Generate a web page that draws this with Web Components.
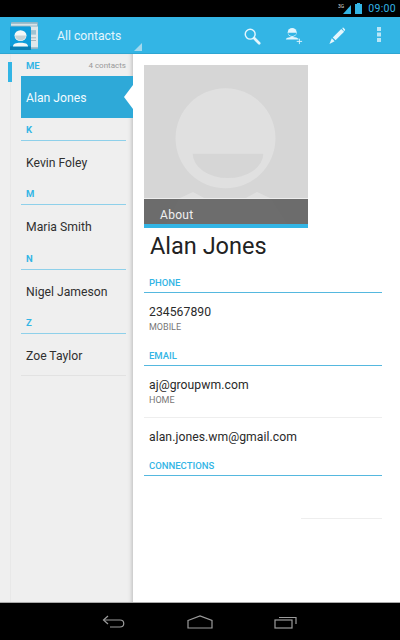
<!DOCTYPE html>
<html>
<head>
<meta charset="utf-8">
<style>
html, body { margin: 0; padding: 0; background: #000; }
body { width: 400px; height: 640px; overflow: hidden; font-family: Roboto, "Liberation Sans", sans-serif; }
</style>
</head>
<body>
<phone-shell>
  <status-bar slot="status"></status-bar>
  <action-bar slot="action"></action-bar>
  <contact-list slot="list">
    <list-head label="ME" first><span>4 contacts</span></list-head>
    <list-row selected>Alan Jones</list-row>
    <list-head label="K"></list-head>
    <list-row>Kevin Foley</list-row>
    <list-head label="M"></list-head>
    <list-row>Maria Smith</list-row>
    <list-head label="N"></list-head>
    <list-row>Nigel Jameson</list-row>
    <list-head label="Z"></list-head>
    <list-row last>Zoe Taylor</list-row>
  </contact-list>
  <contact-detail slot="detail">
    <contact-photo>About</contact-photo>
    <h1 slot="name">Alan Jones</h1>
    <detail-section slot="rows" label="PHONE">
      <detail-row sub="MOBILE">234567890</detail-row>
    </detail-section>
    <detail-section slot="rows" label="EMAIL">
      <detail-row sub="HOME" divider>aj@groupwm.com</detail-row>
      <detail-row>alan.jones.wm@gmail.com</detail-row>
    </detail-section>
    <detail-section slot="rows" label="CONNECTIONS" tail></detail-section>
  </contact-detail>
  <nav-bar slot="nav"></nav-bar>
</phone-shell>

<script>
function define(name, css, html) {
  customElements.define(name, class extends HTMLElement {
    constructor() {
      super();
      var root = this.attachShadow({ mode: 'open' });
      root.innerHTML = '<style>' + css + '</style>' + html(this);
    }
  });
}

define('phone-shell', `
  :host { display: flex; flex-direction: column; width: 400px; height: 640px; }
  .main { flex: 1; display: flex; min-height: 0; background: #fff; }
`, function () { return `
  <slot name="status"></slot>
  <slot name="action"></slot>
  <div class="main"><slot name="list"></slot><slot name="detail"></slot></div>
  <slot name="nav"></slot>`; });

define('status-bar', `
  :host { display: flex; align-items: center; justify-content: flex-end; gap: 3px; height: 16px; padding-right: 4px; background: #000; color: #33b5e5; }
  .time { font-size: 10.5px; letter-spacing: .3px; margin-left: 3px; }
  svg { display: block; }
`, function () { return `
  <svg width="14" height="11" viewBox="0 0 14 11"><path d="M5 11 13 2v9z" fill="#33b5e5"/><text x="0" y="5" font-size="5" fill="#ddd" font-family="Roboto">3G</text></svg>
  <svg width="7" height="11" viewBox="0 0 7 11"><path d="M2 0h3v1h2v10H0V1h2z" fill="#33b5e5"/></svg>
  <span class="time">09:00</span>`; });

define('action-bar', `
  :host { display: flex; align-items: center; position: relative; height: 37px; margin-top: 1px; background: #33b5e5; box-shadow: inset 0 -1px 0 #2ea6d2; color: #e4f6fd; }
  .logo { margin-left: 10px; display: block; }
  .title { font-size: 12.2px; margin-left: 19px; flex: 1; }
  .caret { position: absolute; left: 134px; top: 26px; width: 0; height: 0; border-style: solid; border-width: 0 0 8px 8px; border-color: transparent transparent #a3d9ee transparent; }
  .icons { display: flex; }
  .icon { display: flex; justify-content: center; width: 42.500px; }
  .icons svg { display: block; }
`, function () { return `
  <svg class="logo" width="28" height="28" viewBox="0 0 28 31" preserveAspectRatio="none">
    <rect x="1" y="0" width="27" height="30" rx="1" fill="#8fb6c7"/>
    <rect x="1" y="2" width="26" height="2" fill="#d8e3e8"/>
    <rect x="20" y="5" width="8" height="23" fill="#dfe7ea"/>
    <rect x="21" y="9" width="5" height="5" fill="#9fc3d2"/>
    <rect x="21" y="17" width="5" height="1" fill="#9fb0b8"/>
    <rect x="21" y="20" width="5" height="1" fill="#9fb0b8"/>
    <rect x="0" y="5" width="21" height="26" rx="1" fill="#0f9ddb"/>
    <rect x="0" y="27" width="21" height="4" fill="#0b7fb4"/>
    <circle cx="10.500" cy="15" r="6" fill="#f3f7f8"/>
    <path d="M5 15h11a5.500 5.500 0 0 1-11 0z" fill="#c7d2d6"/>
    <path d="M3 27c0-3 3-4 7.500-4s7.500 1 7.500 4z" fill="#f3f7f8"/>
  </svg>
  <span class="title">All contacts</span>
  <span class="caret"></span>
  <div class="icons">
    <span class="icon"><svg width="18" height="18" viewBox="0 0 20 20" fill="none" stroke="#e4f6fd"><circle cx="8" cy="8" r="5.500" stroke-width="1.600"/><path d="M12.500 12.500 18 18" stroke-width="3" stroke-linecap="round"/></svg></span>
    <span class="icon"><svg width="18" height="18" viewBox="0 0 20 20" fill="#e4f6fd"><circle cx="8" cy="6" r="5"/><path d="M3.500 6.500h9a4.500 3.500 0 0 1-9 0z" fill="#33b5e5"/><path d="M1 14c0-2 3-3 7-3s6 1 7 2v1z"/><path d="M16 13v6M13 16h6" stroke="#e4f6fd" stroke-width="1"/></svg></span>
    <span class="icon"><svg width="18" height="18" viewBox="0 0 19 19" fill="#e4f6fd"><path d="M5 11 14 2l3 3-9 9z"/><path d="M15 1l1-.500 2 2 0 1-1 1z"/><path d="M4 12l3 3-5.500 3z"/></svg></span>
    <span class="icon" style="width:42px"><svg width="4" height="15" viewBox="0 0 4 15" fill="#b9e6f7"><rect x="0" y="0" width="4" height="4"/><rect x="0" y="5.500" width="4" height="4"/><rect x="0" y="11" width="4" height="4"/></svg></span>
  </div>`; });

define('contact-list', `
  :host { display: block; box-sizing: border-box; position: relative; width: 133px; height: 100%; background: #efefef; padding: 0 0 0 21px; box-shadow: inset -4px 0 4px -3px #bbb; }
  .rail { position: absolute; left: 10px; top: 0; bottom: 0; width: 1px; background: #e8e8e8; }
  .tick { position: absolute; left: 8px; top: 8px; width: 4px; height: 20px; background: #33b5e5; }
`, function () { return `<span class="rail"></span><span class="tick"></span><slot></slot>`; });

define('list-head', `
  :host { display: flex; align-items: center; justify-content: space-between; box-sizing: border-box; height: 22.500px; margin-right: 7px; padding: 1px 0 0 5px; border-bottom: 1px solid #8ed0ea; font: 700 9.500px Roboto, sans-serif; color: #33b5e5; }
  :host([first]) { border-bottom: 0; height: 22px; padding-top: 0; }
  ::slotted(span) { font-weight: 400; font-size: 8px; color: #999; }
`, function (el) { return `<span>${el.getAttribute('label')}</span><slot></slot>`; });

define('list-row', `
  :host { display: flex; align-items: center; position: relative; box-sizing: border-box; height: 42px; padding: 2px 0 0 5px; font-size: 12.200px; color: #303030; }
  :host([last]) { margin-right: 7px; border-bottom: 1px solid #e2e2e2; }
  :host([selected]) { background: #2ea9d8; color: #f2fbff; }
  .notch { position: absolute; right: 0; top: 9px; width: 9px; height: 24px; background: #fff; clip-path: polygon(100% 0, 0 50%, 100% 100%); }
`, function (el) { return `<slot></slot>` + (el.hasAttribute('selected') ? '<span class="notch"></span>' : ''); });

define('contact-detail', `
  :host { display: block; flex: 1; padding: 11px 18px 0 11px; background: #fff; }
  ::slotted(h1) { margin: 2px 0 0 6px; font-weight: 400; font-size: 23.500px; line-height: 32px; color: #222; }
  .rows { display: block; margin-top: 8px; }
`, function () { return `<slot></slot><slot name="name"></slot><div class="rows"><slot name="rows"></slot></div>`; });

define('contact-photo', `
  :host { display: block; position: relative; box-sizing: border-box; width: 164px; height: 163px; background: #d6d6d6; overflow: hidden; }
  svg { position: absolute; left: 0; top: 0; }
  .cap { position: absolute; left: 0; right: 0; bottom: 0; height: 30px; box-sizing: border-box; padding: 9px 0 0 16px; background: rgba(96,96,96,.9); border-bottom: 4px solid #33b5e5; border-top: 1px solid #ededed; color: #f0f0f0; font-size: 12px; letter-spacing: .3px; }
`, function () { return `
  <svg width="164" height="163" viewBox="0 0 164 163">
    <circle cx="81.500" cy="73.300" r="50" fill="#e0e0e0"/>
    <path d="M48.700 88.700h70.600a35.300 24.300 0 0 1-70.600 0z" fill="#d6d6d6"/>
    <path d="M20 164 36 133 49 127 62 134H100L113 127 126 133 146 164z" fill="#e0e0e0"/>
  </svg>
  <div class="cap"><slot></slot></div>`; });

define('detail-section', `
  :host { display: block; }
  .head { box-sizing: border-box; height: 23px; padding: 7px 0 0 5px; border-bottom: 1px solid #55b8df; font: 500 9.500px/12px Roboto, sans-serif; color: #33b5e5; }
  .tail { width: 81px; margin: 42px 0 0 auto; border-top: 1px solid #eee; }
`, function (el) { return `<div class="head">${el.getAttribute('label')}</div><slot></slot>` + (el.hasAttribute('tail') ? '<div class="tail"></div>' : ''); });

define('detail-row', `
  :host { display: block; box-sizing: border-box; padding: 10px 0 0 5px; height: 50px; font-size: 12.200px; line-height: 19.500px; letter-spacing: .05px; color: #2a2a2a; }
  :host(:not([sub])) { height: 35.800px; }
  :host([divider]) { border-bottom: 1px solid #eee; height: 51.500px; }
  .sub { font-size: 9px; line-height: 10px; margin-top: -1px; color: #777; letter-spacing: 0; }
`, function (el) { var s = el.getAttribute('sub'); return `<slot></slot>` + (s ? `<div class="sub">${s}</div>` : ''); });

define('nav-bar', `
  :host { display: flex; align-items: center; justify-content: center; height: 38px; background: #000; border-top: 1px solid #aaa; box-sizing: border-box; gap: 0; }
  span { display: flex; justify-content: center; width: 86px; }
  svg { display: block; }
`, function () { return `
  <span><svg width="24" height="14" viewBox="0 0 24 14" fill="none" stroke="#9c9c9c" stroke-width="1.200"><path d="M6 1 1.500 5 6 9"/><path d="M2 5h16c5 0 5 7 0 7H8"/></svg></span>
  <span><svg width="26" height="14" viewBox="0 0 26 14" fill="none" stroke="#9c9c9c" stroke-width="1.200"><path d="M1 5.500 13 1l12 4.500V13H1z"/></svg></span>
  <span><svg width="24" height="14" viewBox="0 0 24 14" fill="none" stroke="#9c9c9c" stroke-width="1.200"><rect x="1" y="5" width="17" height="8"/><path d="M5 2.500h17V9"/></svg></span>`; });
</script>
</body>
</html>
